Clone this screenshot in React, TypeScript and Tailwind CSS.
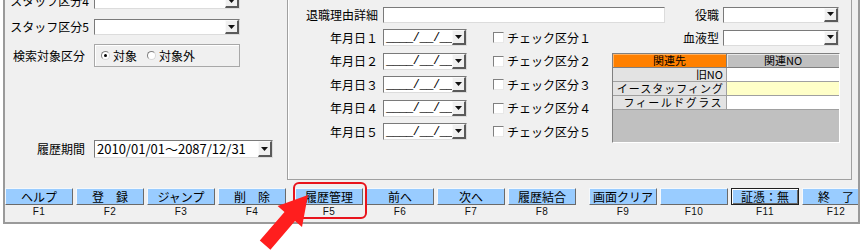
import React from "react";

type P = { className?: string; children?: React.ReactNode };

function Tri() {
  return (
    <svg width="7" height="4" viewBox="0 0 7 4">
      <polygon points="0,0 7,0 3.5,4" fill="#111" />
    </svg>
  );
}

function DropBtn() {
  return (
    <div className="w-[14px] h-full flex items-center justify-center bg-[#f0f0f0] border-t border-l border-t-[#fafafa] border-l-[#fafafa] border-r-2 border-b-2 border-r-[#5a5a5a] border-b-[#5a5a5a]">
      <Tri />
    </div>
  );
}

function Combo({ className = "", children }: P) {
  return (
    <div className={`flex bg-white border border-t-[#7a7a7a] border-l-[#7a7a7a] border-b-[#dcdcdc] border-r-[#dcdcdc] ${className}`}>
      <div className="flex-1 min-w-0 overflow-hidden whitespace-nowrap pl-[2px] flex items-center">{children}</div>
      <DropBtn />
    </div>
  );
}

function Check() {
  return <div className="w-[11px] h-[11px] bg-white border border-t-[#808080] border-l-[#808080] border-b-[#e8e8e8] border-r-[#e8e8e8]" />;
}

function Radio({ on = false }: { on?: boolean }) {
  return (
    <div className="w-[9px] h-[9px] rounded-full bg-white border border-t-[#808080] border-l-[#808080] border-b-[#d8d8d8] border-r-[#d8d8d8] flex items-center justify-center">
      {on && <div className="w-[3px] h-[3px] rounded-full bg-black" />}
    </div>
  );
}

const dates = ["１", "２", "３", "４", "５"];

function FKey({ label, f, focused = false }: { label: string; f: string; focused?: boolean }) {
  return (
    <div className="w-[68px] flex flex-col shrink-0">
      <div
        className={
          focused
            ? "h-[17px] bg-[#99ccff] border border-[#202020] shadow-[inset_1px_1px_0_#ffffff,inset_-1px_-1px_0_#6a6a6a] flex items-center justify-center text-[12px] leading-[15px] whitespace-nowrap"
            : "h-[17px] bg-[#99ccff] border border-t-[#f4f8fc] border-l-[#f4f8fc] border-b-[#6a6a6a] border-r-[#6a6a6a] flex items-center justify-center text-[12px] leading-[15px] whitespace-nowrap"
        }
      >
        {label}
      </div>
      <div className="h-[14px] flex items-center justify-center font-['Liberation_Sans',sans-serif] text-[10px] tracking-[0.5px] text-[#111] leading-[14px]">
        {f}
      </div>
    </div>
  );
}

export default function App() {
  return (
    <div className="relative w-[864px] h-[252px] bg-white overflow-hidden font-['Noto_Sans_CJK_JP','Noto_Sans',sans-serif] text-[12px] leading-[14px] text-black">
      <div className="ml-[3px] w-[857px] h-[224px] bg-[#f0f0f0] border-l-2 border-r-2 border-b-2 border-[#9a9a9a] flex flex-col overflow-hidden">
        {/* top area */}
        <div className="h-[180px] flex shrink-0">
          {/* left panel */}
          <div className="w-[282px] h-full flex flex-col shrink-0">
            <div className="-mt-[10px] h-[22px] flex items-center">
              <div className="w-[84px] text-right whitespace-nowrap">スタッフ区分4</div>
              <Combo className="ml-[5px] w-[146px] h-[16px]" />
            </div>
            <div className="mt-[4px] h-[22px] flex items-center">
              <div className="w-[84px] text-right whitespace-nowrap">スタッフ区分5</div>
              <Combo className="ml-[5px] w-[146px] h-[16px]" />
            </div>
            <div className="mt-[6px] h-[23px] flex items-center">
              <div className="w-[84px] pr-[4px] text-right whitespace-nowrap">検索対象区分</div>
              <div className="ml-[5px] w-[146px] h-full border border-[#a8a8a8] shadow-[inset_1px_1px_0_#ffffff] flex items-center pl-[6px]">
                <Radio on />
                <span className="ml-[3px]">対象</span>
                <div className="ml-[10px]">
                  <Radio />
                </div>
                <span className="ml-[3px]">対象外</span>
              </div>
            </div>
            <div className="mt-[73px] h-[18px] flex items-center">
              <div className="w-[84px] pr-[4px] text-right whitespace-nowrap">履歴期間</div>
              <Combo className="ml-[5px] w-[179px] h-[18px]">
                <span className="text-[13px] leading-[14px]">2010/01/01〜2087/12/31</span>
              </Combo>
            </div>
          </div>

          {/* middle panel */}
          <div className="w-[565px] h-full shrink-0 border-l border-r border-b border-[#a0a0a0] shadow-[inset_1px_0_0_#ffffff] pt-[3px] pr-[12px] flex flex-col">
            <div className="h-[23px] flex items-center">
              <div className="w-[90px] text-right whitespace-nowrap">退職理由詳細</div>
              <div className="ml-[5px] w-[282px] h-[16px] bg-white border border-t-[#7a7a7a] border-l-[#7a7a7a] border-b-[#dcdcdc] border-r-[#dcdcdc]" />
              <div className="flex-1 text-right pr-[4px] whitespace-nowrap">役職</div>
              <Combo className="w-[116px] h-[16px]" />
            </div>
            <div className="flex">
              <div className="w-[324px] flex flex-col">
                {dates.map((d) => (
                  <div key={d} className="h-[23.5px] flex items-center">
                    <div className="w-[90px] text-right whitespace-nowrap">年月日{d}</div>
                    <Combo className="ml-[5px] w-[84px] h-[17px]">
                      <span className="font-['Liberation_Mono',monospace] text-[12px] leading-[14px] tracking-[-0.5px]">____/__/__</span>
                    </Combo>
                    <div className="ml-[26px]">
                      <Check />
                    </div>
                    <span className="ml-[3px] whitespace-nowrap">チェック区分{d}</span>
                  </div>
                ))}
              </div>
              <div className="w-[227px] flex flex-col">
                <div className="h-[23.5px] flex items-center">
                  <div className="flex-1 text-right pr-[4px] whitespace-nowrap">血液型</div>
                  <Combo className="w-[116px] h-[16px]" />
                </div>
                <div className="mt-[3px] w-[228px] border border-t-[#808080] border-l-[#808080] border-b-white border-r-white bg-[#c0c0c0] text-[11px] leading-[13px]">
                  <div className="flex h-[14px]">
                    <div className="w-[114px] bg-[#ff8000] border-r border-b border-[#808080] shadow-[inset_1px_1px_0_#ffb060] text-center">関連先</div>
                    <div className="flex-1 bg-[#c0c0c0] border-b border-[#808080] shadow-[inset_1px_1px_0_#e8e8e8] text-center">関連NO</div>
                  </div>
                  <div className="flex h-[14px]">
                    <div className="w-[114px] bg-[#e3e3e3] border-r border-b border-[#a0a0a0] text-right pr-[3px] whitespace-nowrap">旧NO</div>
                    <div className="flex-1 bg-white border-b border-[#a0a0a0]" />
                  </div>
                  <div className="flex h-[14px]">
                    <div className="w-[114px] bg-[#e3e3e3] border-r border-b border-[#a0a0a0] text-right pr-[2px] whitespace-nowrap tracking-[1px]">イースタッフィング</div>
                    <div className="flex-1 bg-[#ffffc8] border-b border-[#a0a0a0]" />
                  </div>
                  <div className="flex h-[14px]">
                    <div className="w-[114px] bg-[#e3e3e3] border-r border-b border-[#a0a0a0] text-right pr-[3px] whitespace-nowrap tracking-[1.5px]">フィールドグラス</div>
                    <div className="flex-1 bg-white border-b border-[#a0a0a0]" />
                  </div>
                  <div className="h-[32px]" />
                </div>
              </div>
            </div>
          </div>
          <div className="flex-1" />
        </div>

        {/* function key bar */}
        <div className="flex-1 flex pt-[8px]">
          <div className="flex gap-[3px]">
            <FKey label="ヘルプ" f="F1" />
            <FKey label="登　録" f="F2" />
            <FKey label="ジャンプ" f="F3" />
            <FKey label="削　除" f="F4" />
          </div>
          <div className="ml-[9px] flex gap-[3px]">
            <FKey label="履歴管理" f="F5" />
            <FKey label="前へ" f="F6" />
            <FKey label="次へ" f="F7" />
            <FKey label="履歴結合" f="F8" />
          </div>
          <div className="ml-[13px] flex gap-[3px]">
            <FKey label="画面クリア" f="F9" />
            <FKey label="" f="F10" />
            <FKey label="証憑：無" f="F11" focused />
            <FKey label="終　了" f="F12" />
          </div>
        </div>
      </div>

      {/* highlight rectangle */}
      <div className="absolute left-[293px] top-[182px] w-[74px] h-[37px] border-2 border-[#e8141c] rounded-[6px]" />

      {/* red arrow */}
      <svg className="absolute left-0 top-0 pointer-events-none" width="864" height="252" viewBox="0 0 864 252">
        <polygon
          points="308,195 302,227 295,221 270.4,249.7 259.8,240.6 284.5,212 277.6,206"
          fill="#ff1e1e"
        />
      </svg>
    </div>
  );
}
